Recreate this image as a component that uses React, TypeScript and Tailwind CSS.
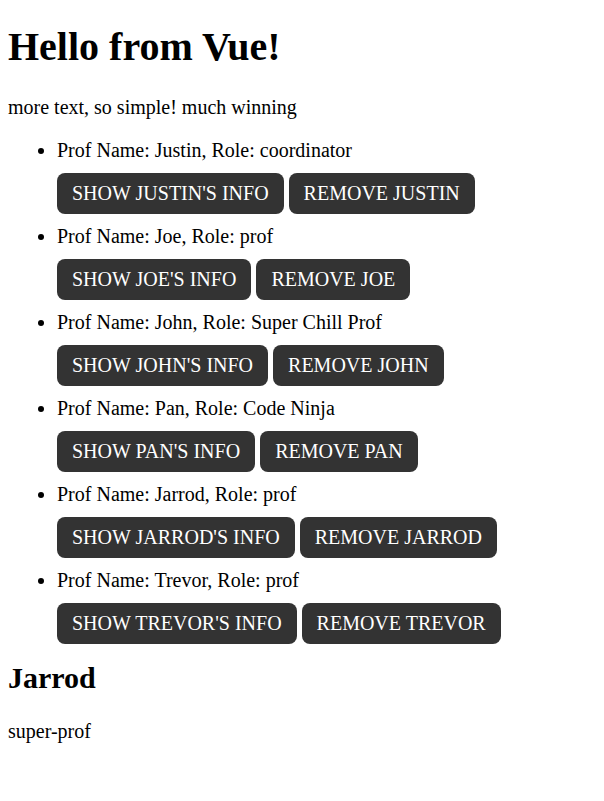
const profs = [
  { name: "Justin", role: "coordinator" },
  { name: "Joe", role: "prof" },
  { name: "John", role: "Super Chill Prof" },
  { name: "Pan", role: "Code Ninja" },
  { name: "Jarrod", role: "prof" },
  { name: "Trevor", role: "prof" },
]

const btn =
  "h-[41px] rounded-[8px] bg-[#333333] px-[15px] text-white uppercase font-['Liberation_Serif','Times_New_Roman',serif] text-[20px] leading-[23px]"

export default function App() {
  return (
    <div className="min-h-[801px] bg-white px-[8px] pt-px text-black font-['Liberation_Serif','Times_New_Roman',serif] text-[20px] leading-[23px]">
      <h1 className="mt-[23px] text-[40px] leading-[46px] font-bold">Hello from Vue!</h1>
      <p className="mt-[26px]">more text, so simple! much winning</p>
      <ul className="mt-[20px] pl-[49px] list-disc">
        {profs.map((p) => (
          <li key={p.name}>
            <div>
              Prof Name: {p.name}, Role: {p.role}
            </div>
            <div className="mt-[10.5px] mb-[11.5px] flex gap-[5px]">
              <button className={btn}>Show {p.name}'s info</button>
              <button className={btn}>Remove {p.name}</button>
            </div>
          </li>
        ))}
      </ul>
      <h2 className="mt-[17px] text-[30px] leading-[34.5px] font-bold">Jarrod</h2>
      <p className="mt-[25px]">super-prof</p>
    </div>
  )
}
